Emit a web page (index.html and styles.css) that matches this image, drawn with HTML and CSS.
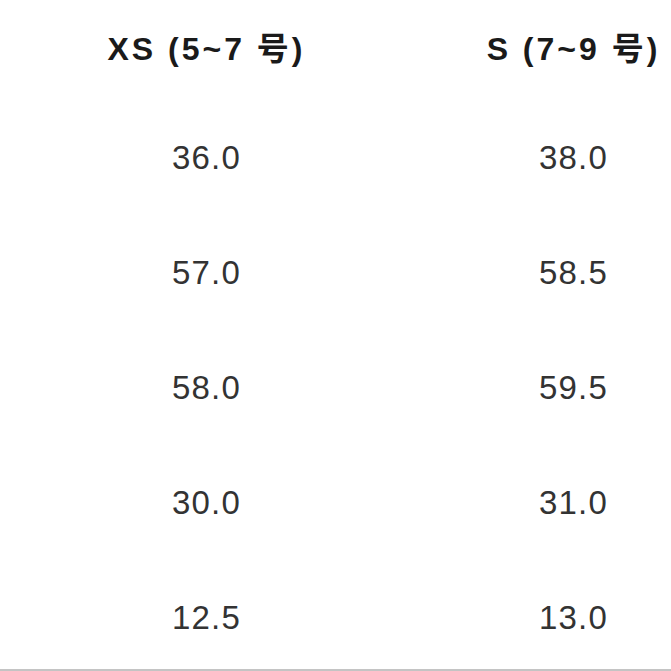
FILE: index.html
```html
<!DOCTYPE html>
<html>
<head>
<meta charset="utf-8">
<link rel="stylesheet" href="styles.css">
</head>
<body>
<div class="page">
  <div class="table">
    <div class="cell head">XS (5~7 号)</div>
    <div class="cell head">S (7~9 号)</div>
    <div class="cell num">36.0</div>
    <div class="cell num">38.0</div>
    <div class="cell num">57.0</div>
    <div class="cell num">58.5</div>
    <div class="cell num">58.0</div>
    <div class="cell num">59.5</div>
    <div class="cell num">30.0</div>
    <div class="cell num">31.0</div>
    <div class="cell num">12.5</div>
    <div class="cell num">13.0</div>
  </div>
  <div class="rule"></div>
</div>
</body>
</html>
```
FILE: styles.css
```css
html, body {
  margin: 0;
  padding: 0;
  background: #ffffff;
  overflow: hidden;
}
.page {
  width: 671px;
  height: 671px;
  display: flex;
  flex-direction: column;
  overflow: hidden;
}
.table {
  display: grid;
  grid-template-columns: 367px 367px;
  grid-auto-rows: 115px;
  padding-left: 23px;
  margin-top: -15px;
  flex: 1 1 auto;
  min-height: 0;
  overflow: hidden;
}
.cell {
  display: flex;
  align-items: center;
  justify-content: center;
  font-family: "Liberation Sans", Arial, "Noto Sans CJK SC", sans-serif;
  color: #222222;
}
.head {
  font-weight: bold;
  font-size: 32px;
  letter-spacing: 3px;
  color: #1a1a1a;
  padding-top: 6px;
}
.num {
  font-size: 33px;
  letter-spacing: 1.2px;
  color: #333333;
}
.rule {
  height: 2px;
  background: #c4c4c4;
  flex: none;
}
```
